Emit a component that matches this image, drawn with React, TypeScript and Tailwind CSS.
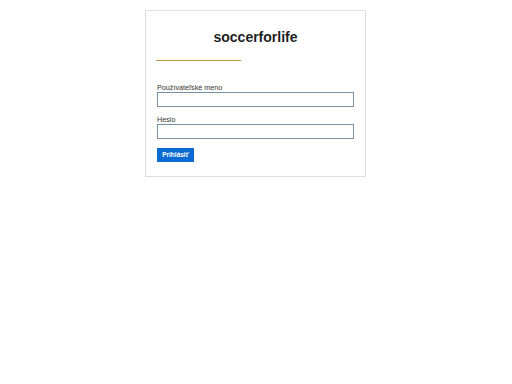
import React from 'react';

const App: React.FC = () => {
  return (
    <div className="min-h-screen bg-white pt-[10px] font-['Liberation_Sans',Arial,sans-serif]">
      <div className="ml-[145px] w-[221px] border border-[#dedede] px-[11px] pb-[14px]">
        <h1 className="pt-[18px] text-center text-[14px] font-bold leading-[16px] text-[#1e1e1e]">soccerforlife</h1>
        <div className="-ml-[1px] mt-[15px] h-[1px] w-[85px] bg-[#b89a3a]" />

        <form className="mt-[22px] flex flex-col" onSubmit={(e) => e.preventDefault()}>
          <label className="text-[7.2px] leading-[9px] text-[#333]">Používateľské meno</label>
          <input type="text" className="h-[15px] w-full border border-[#7a90a3] bg-white outline-none" />

          <label className="mt-[8px] text-[7.2px] leading-[9px] text-[#333]">Heslo</label>
          <input type="password" className="h-[15px] w-full border border-[#7a90a3] bg-white outline-none" />

          <div className="mt-[9px]">
            <button
              type="submit"
              className="flex h-[14px] w-[37px] items-center justify-center bg-[#0b6bd0] text-[6.5px] font-bold text-white"
            >
              Prihlásiť
            </button>
          </div>
        </form>
      </div>
    </div>
  );
};

export default App;
